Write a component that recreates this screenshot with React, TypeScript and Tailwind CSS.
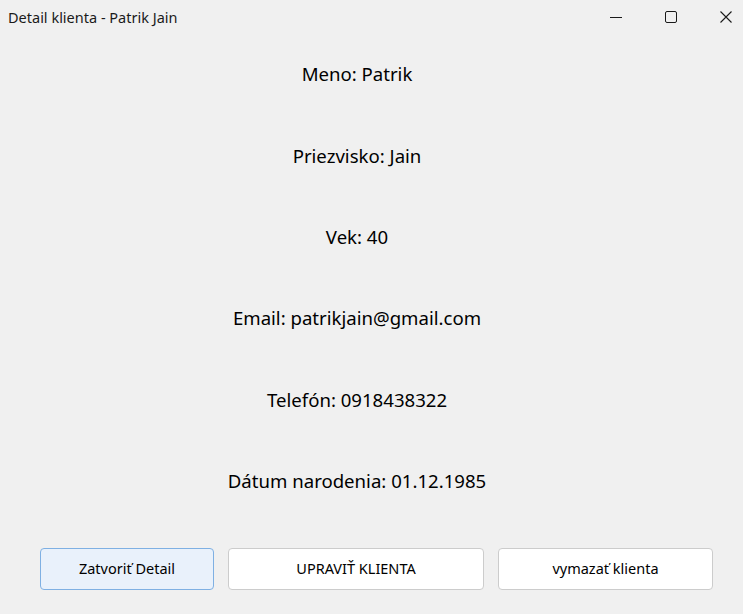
import React from "react";

const rows = [
  "Meno: Patrik",
  "Priezvisko: Jain",
  "Vek: 40",
  "Email: patrikjain@gmail.com",
  "Telefón: 0918438322",
  "Dátum narodenia: 01.12.1985",
];

export default function App() {
  return (
    <div
      className="w-[743px] h-[614px] bg-[#f0f0f0] flex flex-col text-[#000]"
      style={{ fontFamily: '"Noto Sans", "Open Sans", sans-serif' }}
    >
      <div className="h-[34px] flex items-center">
        <div className="pl-[8px] text-[14.5px] leading-none text-[#1a1a1a] flex-1">Detail klienta - Patrik Jain</div>
        <div className="flex items-center h-full gap-[43px] pr-[11px]">
          <svg width="12" height="12" viewBox="0 0 12 12">
            <line x1="0" y1="6.5" x2="12" y2="6.5" stroke="#1a1a1a" strokeWidth="1" />
          </svg>
          <svg width="12" height="12" viewBox="0 0 12 12">
            <rect x="0.5" y="0.5" width="11" height="11" rx="1.5" fill="none" stroke="#1a1a1a" strokeWidth="1" />
          </svg>
          <svg width="12" height="12" viewBox="0 0 12 12">
            <path d="M0.5 0.5 L11.5 11.5 M11.5 0.5 L0.5 11.5" stroke="#1a1a1a" strokeWidth="1.1" />
          </svg>
        </div>
      </div>
      <div className="flex flex-col pr-[29px]">
        {rows.map((r) => (
          <div key={r} className="h-[81.3px] flex items-center justify-center text-[18.6px] leading-none">
            {r}
          </div>
        ))}
      </div>
      <div className="flex pl-[40px] pr-[30px] gap-[14px] mt-[26px]">
        <button className="w-[174px] h-[42px] rounded-[4px] border border-[#7fb0e3] bg-[#e9f1fb] text-[14.5px]">
          Zatvoriť Detail
        </button>
        <button className="w-[256px] h-[42px] rounded-[4px] border border-[#cccccc] bg-white text-[14.5px]">
          UPRAVIŤ KLIENTA
        </button>
        <button className="w-[215px] h-[42px] rounded-[4px] border border-[#cccccc] bg-white text-[14.5px]">
          vymazať klienta
        </button>
      </div>
    </div>
  );
}
